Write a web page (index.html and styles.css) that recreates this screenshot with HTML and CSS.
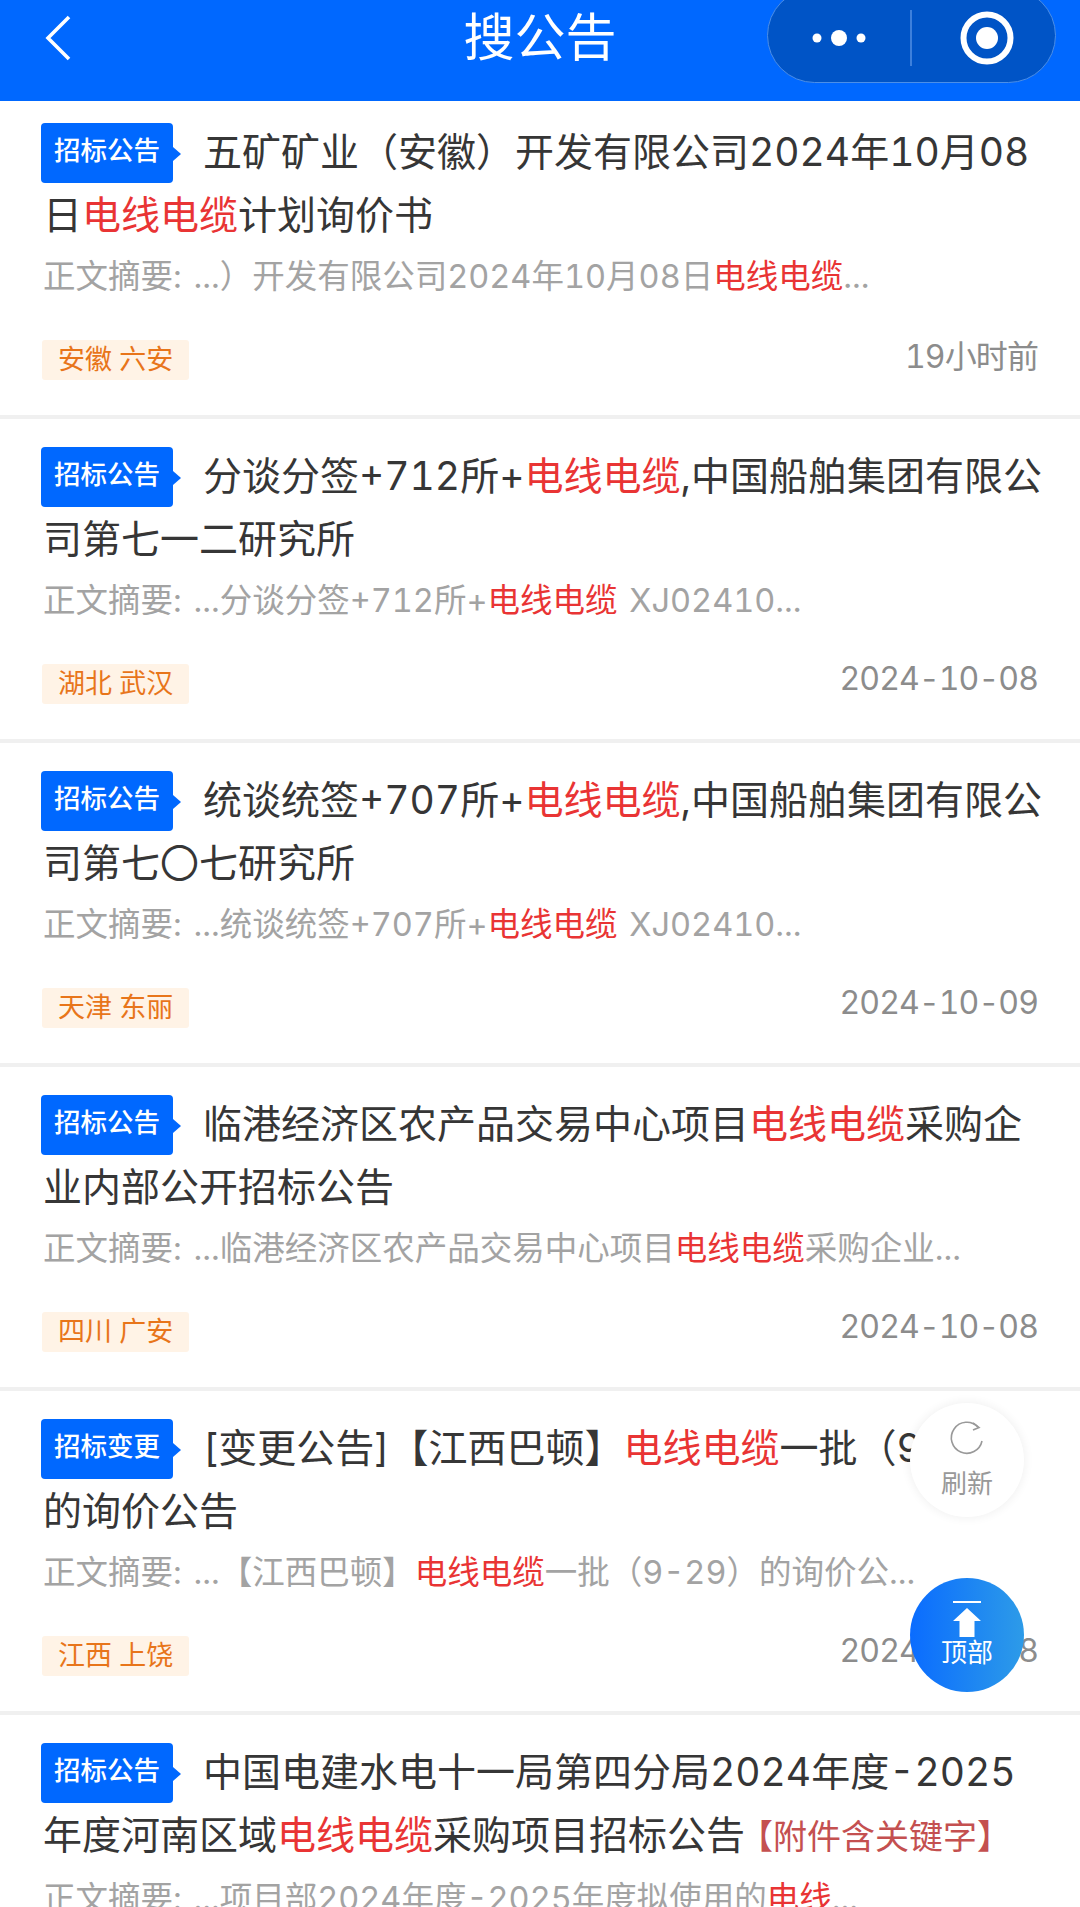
FILE: index.html
```html
<!DOCTYPE html>
<html lang="zh-CN">
  <head>
    <meta charset="UTF-8" />
    <meta name="viewport" content="width=device-width, initial-scale=1.0" />
    <title>搜公告</title>
    <link rel="stylesheet" href="styles.css">
  </head>
  <body>
    <header class="topbar">
      <svg class="back" viewBox="0 0 26 46" width="26" height="46">
        <path d="M24 2 L3 23 L24 44" fill="none" stroke="#fff" stroke-width="3.6" />
      </svg>
      <h1>搜公告</h1>
      <div class="capsule">
        <svg class="dots" viewBox="0 0 54 20" width="54" height="20">
          <circle cx="5" cy="10" r="4.5" fill="#fff" />
          <circle cx="27" cy="10" r="8" fill="#fff" />
          <circle cx="49" cy="10" r="4.5" fill="#fff" />
        </svg>
        <span class="sep"></span>
        <svg class="ring" viewBox="0 0 56 56" width="56" height="56">
          <circle cx="28" cy="28" r="23.5" fill="none" stroke="#fff" stroke-width="6" />
          <circle cx="28" cy="28" r="11" fill="#fff" />
        </svg>
      </div>
    </header>

    <main class="list">
      <article class="item">
        <h2 class="title"><span class="tag">招标公告</span>五矿矿业（安徽）开发有限公司2024年10月08日<em>电线电缆</em>计划询价书</h2>
        <p class="digest">正文摘要: ...）开发有限公司2024年10月08日<em>电线电缆</em>...</p>
        <div class="meta"><span class="area">安徽 六安</span><time>19小时前</time></div>
      </article>
      <article class="item">
        <h2 class="title"><span class="tag">招标公告</span>分谈分签+712所+<em>电线电缆</em>,中国船舶集团有限公司第七一二研究所</h2>
        <p class="digest">正文摘要: ...分谈分签+712所+<em>电线电缆</em> XJ02410...</p>
        <div class="meta"><span class="area">湖北 武汉</span><time>2024-10-08</time></div>
      </article>
      <article class="item">
        <h2 class="title"><span class="tag">招标公告</span>统谈统签+707所+<em>电线电缆</em>,中国船舶集团有限公司第七〇七研究所</h2>
        <p class="digest">正文摘要: ...统谈统签+707所+<em>电线电缆</em> XJ02410...</p>
        <div class="meta"><span class="area">天津 东丽</span><time>2024-10-09</time></div>
      </article>
      <article class="item">
        <h2 class="title"><span class="tag">招标公告</span>临港经济区农产品交易中心项目<em>电线电缆</em>采购企业内部公开招标公告</h2>
        <p class="digest">正文摘要: ...临港经济区农产品交易中心项目<em>电线电缆</em>采购企业...</p>
        <div class="meta"><span class="area">四川 广安</span><time>2024-10-08</time></div>
      </article>
      <article class="item">
        <h2 class="title"><span class="tag">招标变更</span>[变更公告]【江西巴顿】<em>电线电缆</em>一批（9-29）的询价公告</h2>
        <p class="digest">正文摘要: ...【江西巴顿】<em>电线电缆</em>一批（9-29）的询价公...</p>
        <div class="meta"><span class="area">江西 上饶</span><time>2024-10-08</time></div>
      </article>
      <article class="item">
        <h2 class="title"><span class="tag">招标公告</span>中国电建水电十一局第四分局2024年度-2025年度河南区域<em>电线电缆</em>采购项目招标公告<span class="attach">【附件含关键字】</span></h2>
        <p class="digest">正文摘要: ...项目部2024年度-2025年度拟使用的<em>电线</em>...</p>
      </article>
    </main>

    <button class="float refresh" type="button">
      <svg viewBox="0 0 36 36" width="36" height="36">
        <path d="M29 7 A15.500 15.500 0 1 0 33 21" fill="none" stroke="#999" stroke-width="1.6" />
        <path d="M24 3 L30 7.500 L24 10" fill="none" stroke="#999" stroke-width="1.6" />
      </svg>
      <span>刷新</span>
    </button>
    <button class="float totop" type="button">
      <svg viewBox="0 0 30 36" width="30" height="36">
        <rect x="1" y="0" width="28" height="2" fill="#fff" />
        <path d="M15 7 L29 20 L22.500 20 L22.500 36 L7.500 36 L7.500 20 L1 20 Z" fill="#fff" />
      </svg>
      <span>顶部</span>
    </button>
  </body>
</html>
```

FILE: styles.css
```css
html,
body {
  margin: 0;
  height: 1907px;
  overflow: hidden;
}
body {
  font-family: Inter, 'Noto Sans CJK SC', sans-serif;
  font-variant-numeric: tabular-nums;
  background: #fff;
  position: relative;
}
.topbar {
  height: 101px;
  background: #0068ff;
  position: relative;
  display: flex;
  align-items: flex-start;
  justify-content: center;
}
.topbar h1 {
  margin: 0;
  color: #fff;
  font-size: 51px;
  font-weight: 400;
  line-height: 75px;
}
.back {
  position: absolute;
  left: 45px;
  top: 15px;
}
.capsule {
  position: absolute;
  left: 767px;
  top: -12px;
  width: 289px;
  height: 95px;
  box-sizing: border-box;
  border: 1.5px solid #4c8fe8;
  border-radius: 48px;
  background: #0054c6;
  display: flex;
  align-items: center;
  padding: 5px 0 0 44px;
}
.dots {
  flex: none;
}
.sep {
  width: 1.5px;
  height: 56px;
  margin-left: 44px;
  background: #3d80dc;
}
.ring {
  flex: none;
  margin-left: 47px;
}
.item {
  box-sizing: border-box;
  height: 324px;
  padding: 25px 42px 0 42px;
  border-bottom: 4px solid #f0f0f0;
}
.item:first-child {
  height: 318px;
  padding-top: 19px;
}
.item em {
  font-style: normal;
  color: #e93434;
}
.title {
  margin: 0 -6px 0 1px;
  font-size: 39px;
  font-weight: 400;
  line-height: 63px;
  color: #363636;
}
.tag {
  display: inline-block;
  position: relative;
  width: 132px;
  height: 60px;
  margin: 3px 30px 0 -2px;
  border-radius: 4px;
  background: #0068ff;
  color: #fff;
  font-size: 26.500px;
  font-weight: 500;
  line-height: 54px;
  text-align: center;
  vertical-align: top;
}
.tag::after {
  content: "";
  position: absolute;
  right: -8px;
  top: 24px;
  border-left: 8px solid #0068ff;
  border-top: 7px solid transparent;
  border-bottom: 7px solid transparent;
}
.attach {
  margin-left: -6px;
  color: #c45050;
  font-size: 34px;
}
.digest {
  margin: 9px 0 0 1px;
  font-size: 32.500px;
  line-height: 44px;
  color: #a3a3a3;
  white-space: nowrap;
  word-spacing: 3px;
}
.meta {
  margin-top: 41px;
  display: flex;
  align-items: center;
  justify-content: space-between;
}
.area {
  box-sizing: border-box;
  height: 40px;
  padding: 0 16px;
  border-radius: 3px;
  background: #fff3e6;
  color: #e8751a;
  font-size: 27px;
  line-height: 40px;
}
.meta time {
  margin-top: -12px;
  color: #8c8c8c;
  font-size: 32px;
  letter-spacing: -0.9px;
}
.float {
  position: absolute;
  left: 910px;
  width: 114px;
  height: 114px;
  padding: 0;
  border: none;
  border-radius: 50%;
  font-family: inherit;
  font-size: 26px;
  line-height: 32px;
  display: flex;
  flex-direction: column;
  align-items: center;
  justify-content: center;
}
.refresh {
  top: 1403px;
  background: #fff;
  color: #999;
  box-shadow: 0 0 8px 2px rgba(0,0,0,0.05);
}
.refresh span {
  margin-top: 12px;
}
.totop {
  top: 1578px;
  background: linear-gradient(90deg, #0a6cff 0%, #2d9be8 100%);
  color: #fff;
}
```
